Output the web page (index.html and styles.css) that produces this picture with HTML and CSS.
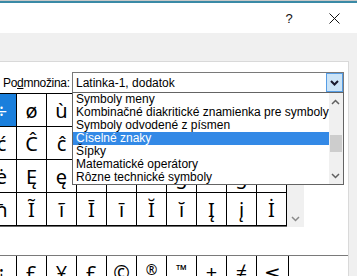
FILE: index.html
```html
<!DOCTYPE html>
<html>
<head>
<meta charset="utf-8">
<link rel="stylesheet" href="styles.css">
</head>
<body>
<div class="window">
  <div class="titlebar">
    <div class="tb-btn help">?</div>
    <div class="tb-btn close">
      <svg width="11" height="11" viewBox="0 0 11 11"><path d="M0.5 0.5L10.5 10.5M10.5 0.5L0.5 10.5" stroke="#111" stroke-width="1" fill="none"/></svg>
    </div>
  </div>
  <div class="tabstrip"></div>
  <div class="page">
    <div class="subset-row">
      <span class="subset-label">Po<u>d</u>množina:</span>
      <div class="combo">
        <span class="combo-text">Latinka-1, dodatok</span>
        <span class="combo-btn">
          <svg width="9" height="6" viewBox="0 0 9 6"><path d="M1 1L4.5 4.5L8 1" stroke="#1a1a2e" stroke-width="2" fill="none"/></svg>
        </span>
        <div class="dropdown">
          <div class="items">
            <div class="item">Symboly meny</div>
            <div class="item">Kombinačné diakritické znamienka pre symboly</div>
            <div class="item">Symboly odvodené z písmen</div>
            <div class="item selected">Číselné znaky</div>
            <div class="item">Šípky</div>
            <div class="item">Matematické operátory</div>
            <div class="item">Rôzne technické symboly</div>
          </div>
          <div class="lscroll">
            <div class="sbtn"><svg width="9" height="6" viewBox="0 0 9 6"><path d="M1 5L4.5 1.5L8 5" stroke="#606060" stroke-width="1.5" fill="none"/></svg></div>
            <div class="thumb"></div>
            <div class="track"></div>
            <div class="sbtn"><svg width="9" height="6" viewBox="0 0 9 6"><path d="M1 1L4.5 4.5L8 1" stroke="#606060" stroke-width="1.5" fill="none"/></svg></div>
          </div>
        </div>
      </div>
    </div>
    <div class="grid-wrap">
      <div class="grid">
        <div class="cell sel">÷</div><div class="cell">ø</div><div class="cell">ù</div><div class="cell">ú</div><div class="cell">û</div><div class="cell">ü</div><div class="cell">ý</div><div class="cell">þ</div><div class="cell">ÿ</div><div class="cell">Ā</div>
        <div class="cell">ć</div><div class="cell">Ĉ</div><div class="cell">ĉ</div><div class="cell">Ċ</div><div class="cell">ċ</div><div class="cell">Č</div><div class="cell">č</div><div class="cell">Ď</div><div class="cell">ď</div><div class="cell">Đ</div>
        <div class="cell">ė</div><div class="cell">Ę</div><div class="cell">ę</div><div class="cell">Ě</div><div class="cell">ě</div><div class="cell">Ĝ</div><div class="cell">ĝ</div><div class="cell">Ğ</div><div class="cell">ğ</div><div class="cell">Ġ</div>
        <div class="cell">ħ</div><div class="cell">Ĩ</div><div class="cell">ĩ</div><div class="cell">Ī</div><div class="cell">ī</div><div class="cell">Ĭ</div><div class="cell">ĭ</div><div class="cell">Į</div><div class="cell">į</div><div class="cell">İ</div>
      </div>
      <div class="gscroll">
        <div class="track"></div>
        <div class="sbtn"><svg width="9" height="6" viewBox="0 0 9 6"><path d="M1 1L4.5 4.5L8 1" stroke="#8a8a8a" stroke-width="1.5" fill="none"/></svg></div>
      </div>
    </div>
    <div class="recent">
      <div class="cell">¡</div><div class="cell">£</div><div class="cell">¥</div><div class="cell">£</div><div class="cell">©</div><div class="cell small">®</div><div class="cell small">™</div><div class="cell">±</div><div class="cell">≠</div><div class="cell last">≤</div>
    </div>
  </div>
</div>
</body>
</html>
```

FILE: styles.css
```css
body {
  margin: 0;
  width: 357px;
  height: 276px;
  overflow: hidden;
  background: #f0f0f0;
  font-family: "Liberation Sans", Arial, sans-serif;
  font-size: 12px;
  color: #000;
}

.window {
  border-top: 1px solid #c8c8c8;
}

.titlebar {
  height: 30px;
  border-top: 2px solid #3a8aa6;
  background: #fff;
  display: flex;
  justify-content: flex-end;
  align-items: center;
}

.tb-btn {
  height: 30px;
  display: flex;
  align-items: center;
  justify-content: center;
}

.help {
  width: 44px;
  font-size: 13px;
  color: #111;
}

.close {
  width: 46px;
}

.tabstrip {
  height: 28px;
}

.page {
  box-sizing: border-box;
  width: 349px;
  height: 215px;
  background: #fff;
  border-top: 1px solid #d9d9d9;
  border-right: 1px solid #d9d9d9;
}

.subset-row {
  display: flex;
  align-items: center;
  padding-top: 10px;
}

.subset-label {
  box-sizing: border-box;
  width: 72px;
  padding-left: 3px;
  letter-spacing: -0.3px;
  white-space: nowrap;
}

.combo {
  position: relative;
  box-sizing: border-box;
  width: 272px;
  height: 21px;
  border: 1px solid #7a7a7a;
  display: flex;
  align-items: center;
}

.combo-text {
  flex: 1;
  padding-left: 3px;
}

.combo-btn {
  box-sizing: border-box;
  width: 17px;
  height: 19px;
  background: #cce4f7;
  border: 1px solid #569de5;
  display: flex;
  align-items: center;
  justify-content: center;
}

.dropdown {
  position: absolute;
  left: -1px;
  top: 19px;
  box-sizing: border-box;
  width: 272px;
  height: 93px;
  background: #fff;
  border: 1px solid #646464;
  display: flex;
  z-index: 5;
}

.items {
  flex: 1;
}

.item {
  height: 13px;
  line-height: 13px;
  padding-left: 3px;
  white-space: nowrap;
}

.item.selected {
  background: #3389e6;
  color: #fff;
}

.lscroll {
  width: 17px;
  background: #f0f0f0;
  display: flex;
  flex-direction: column;
}

.sbtn {
  height: 17px;
  flex: none;
  display: flex;
  align-items: center;
  justify-content: center;
}

.thumb {
  height: 17px;
  margin: 25px 1px 0;
  background: #cdcdcd;
}

.track {
  flex: 1;
}

.grid-wrap {
  display: flex;
  align-items: stretch;
}

.grid {
  margin-left: -13px;
  display: grid;
  grid-template-columns: repeat(10, 30px);
  grid-auto-rows: 33px;
  border-top: 1px solid #000;
  border-bottom: 1px solid #6a6a6a;
}

.cell {
  box-sizing: border-box;
  border-right: 1px solid #000;
  border-bottom: 1px solid #000;
  display: flex;
  align-items: center;
  justify-content: center;
  font-family: "Noto Sans", "DejaVu Sans", sans-serif;
  font-size: 20px;
}

.cell.sel {
  background: #1a7fdc;
  color: #fff;
}

.gscroll {
  width: 17px;
  background: #f0f0f0;
  display: flex;
  flex-direction: column;
}

.recent {
  margin-top: 28px;
  margin-left: -13px;
  display: grid;
  grid-template-columns: repeat(9, 30px) 32px;
  grid-auto-rows: 33px;
  border-top: 1px solid #7a7a7a;
}

.recent .cell.small {
  font-size: 14px;
  align-items: flex-start;
  padding-top: 4px;
}
```
